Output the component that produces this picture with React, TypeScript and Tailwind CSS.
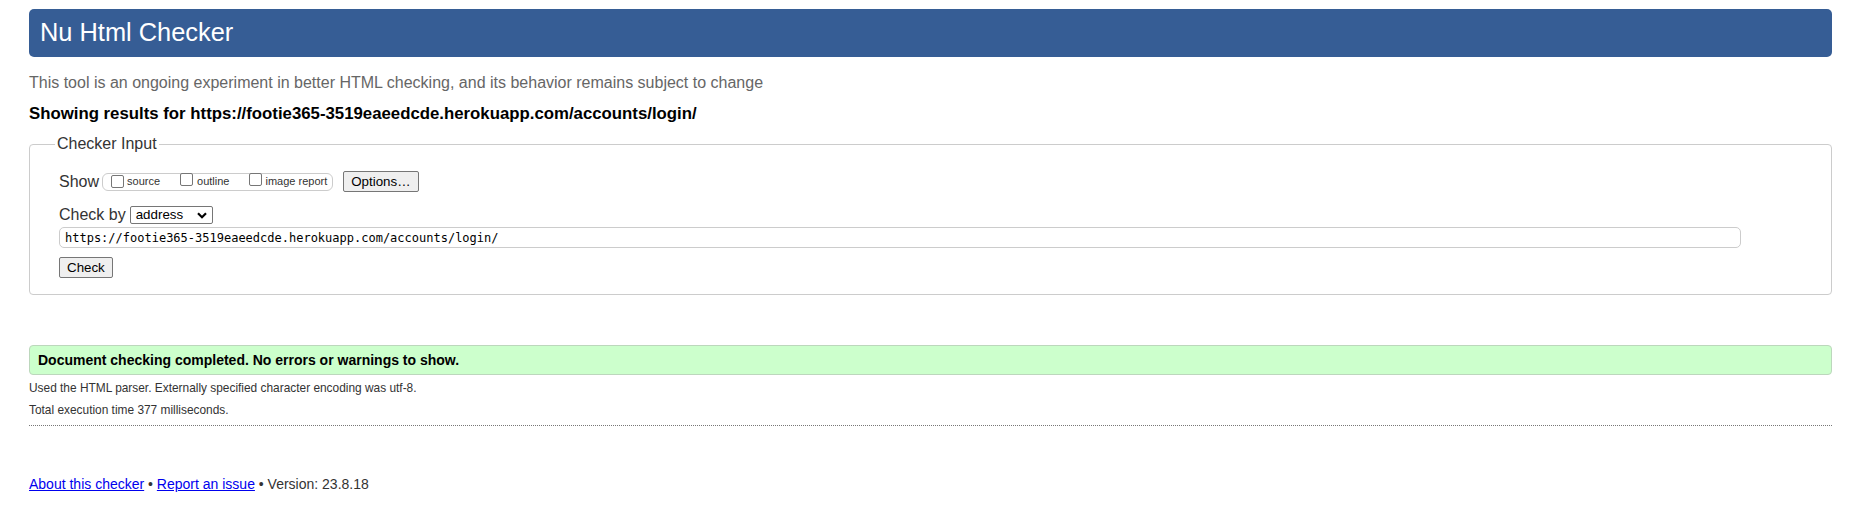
import React from "react";

function Box() {
  return <span className="inline-block h-[13px] w-[13px] shrink-0 rounded-[2px] border border-[#767676] bg-white"></span>;
}

export default function App() {
  const font = { fontFamily: '"Liberation Sans", Arial, sans-serif' };
  return (
    <div className="min-h-[506px] bg-white pl-[29px] pr-[32px] pt-[9px] text-black" style={font}>
      <div className="flex h-[48px] items-center rounded-[5px] bg-[#365d95] pl-[11px]">
        <h1 className="text-[25.4px] leading-none text-white">Nu Html Checker</h1>
      </div>
      <p className="mt-[17px] text-[16px] leading-[18px] text-[#666]">
        This tool is an ongoing experiment in better HTML checking, and its behavior remains subject to change
      </p>
      <p className="mt-[13px] text-[16.8px] font-bold leading-[18px] text-black">
        Showing results for https://footie365-3519eaeedcde.herokuapp.com/accounts/login/
      </p>
      <fieldset className="mt-[12px] h-[160px] rounded-[4px] border border-[#ccc] pl-[29px] pr-[90px]">
        <legend className="ml-[-4px] px-[2px] text-[16px] leading-[18px] text-[#333]">Checker Input</legend>
        <div className="mt-[18px] flex h-[21px] items-center">
          <span className="text-[16px] leading-[18px] text-[#333]">Show</span>
          <span className="ml-[3px] flex h-[18px] items-center rounded-[6px] border border-[#ccc] pl-[8px] pr-[5px] text-[11px] text-[#333]">
            <Box />
            <span className="ml-[3px]">source</span>
            <span className="ml-[20px]"><Box /></span>
            <span className="ml-[4px]">outline</span>
            <span className="ml-[20px]"><Box /></span>
            <span className="ml-[3px]">image report</span>
          </span>
          <span className="ml-[10px] flex h-[21px] items-center rounded-[2px] border border-[#767676] bg-[#efefef] px-[7px] text-[13.33px] text-black">
            Options…
          </span>
        </div>
        <div className="mt-[14px] flex h-[18px] items-center">
          <span className="text-[16px] leading-[18px] text-[#333]">Check by</span>
          <span className="ml-[4px] flex h-[18px] w-[83px] items-center justify-between rounded-[2px] border border-[#767676] bg-white pl-[5px] pr-[5px] text-[13.33px]">
            address
            <svg width="10" height="7" viewBox="0 0 10 7"><path d="M1 1.2 L5 5.2 L9 1.2" fill="none" stroke="#000" strokeWidth="2.2" /></svg>
          </span>
        </div>
        <div
          className="mt-[3px] flex h-[21px] items-center rounded-[5px] border border-[#ccc] pl-[5px] text-[12px] text-black"
          style={{ fontFamily: '"DejaVu Sans Mono", monospace' }}
        >
          https://footie365-3519eaeedcde.herokuapp.com/accounts/login/
        </div>
        <div className="mt-[9px] flex">
          <span className="flex h-[21px] items-center rounded-[2px] border border-[#767676] bg-[#efefef] px-[7px] text-[13.33px]">Check</span>
        </div>
      </fieldset>
      <div className="mt-[50px] flex h-[30px] items-center rounded-[4px] border border-[#bcd7bc] bg-[#ccffcc] pl-[8px] text-[14px] font-bold">
        Document checking completed. No errors or warnings to show.
      </div>
      <p className="mt-[6px] text-[11.9px] leading-[14px] text-[#333]">
        Used the HTML parser. Externally specified character encoding was utf-8.
      </p>
      <p className="mt-[8px] text-[11.9px] leading-[14px] text-[#333]">Total execution time 377 milliseconds.</p>
      <div className="mt-[8px] border-t border-dotted border-[#777]"></div>
      <p className="mt-[50px] text-[14px] leading-[16px] text-[#333]">
        <a className="text-[#0000ee] underline" href="#">About this checker</a> •{" "}
        <a className="text-[#0000ee] underline" href="#">Report an issue</a> • Version: 23.8.18
      </p>
    </div>
  );
}
